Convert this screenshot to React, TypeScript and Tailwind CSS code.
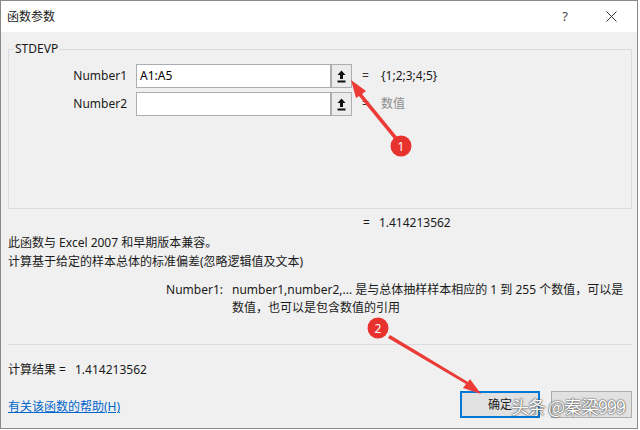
import React from "react";

const latin = "font-['Segoe_UI','Noto_Sans','Noto_Sans_CJK_SC',sans-serif]";

function PickIcon() {
  return (
    <svg width="9" height="13" viewBox="0 0 9 13">
      <path d="M4.5 0.5 L8.5 5 L6 5 L6 9 L3 9 L3 5 L0.5 5 Z" fill="#111" />
      <rect x="0.5" y="10.5" width="8" height="2" fill="#111" />
    </svg>
  );
}

function ArgRow({ label, value, result, muted }: { label: string; value: string; result: string; muted?: boolean }) {
  return (
    <div className="flex items-center h-[24px]">
      <div className="w-[118px] text-right text-[12px] text-[#1a1a1a]">{label}</div>
      <div className="ml-[9px] w-[195px] h-[24px] bg-white border border-[#abadb3] pl-[3px] flex items-center text-[12px] text-black">
        {value}
      </div>
      <div className="w-[21px] h-[24px] bg-[#ececec] border border-[#adadad] flex items-center justify-center">
        <PickIcon />
      </div>
      <div className="ml-[10px] w-[8px] text-[12px] text-[#333]">=</div>
      <div className={`ml-[11px] text-[12px] ${muted ? "text-[#8c8c8c]" : "text-[#1a1a1a]"}`}>{result}</div>
    </div>
  );
}

export default function App() {
  return (
    <div className={`relative w-[640px] h-[430px] bg-white ${latin}`}>
      <div className="w-[638px] h-[429px] border border-[#8a8a8a] flex flex-col">
        {/* title bar */}
        <div className="h-[31px] bg-white flex items-center pl-[6px] text-[12px] text-[#1a1a1a]">
          <span>函数参数</span>
          <span className="ml-auto mr-[38px] text-[13px] text-[#444]">?</span>
          <svg className="mr-[20px]" width="11" height="11" viewBox="0 0 11 11">
            <path d="M0.5 0.5 L10.5 10.5 M10.5 0.5 L0.5 10.5" stroke="#333" strokeWidth="1" />
          </svg>
        </div>

        {/* body */}
        <div className="flex-1 bg-[#f0f0f0] pl-[7px] pr-[5px] flex flex-col text-[12px] text-[#1a1a1a]">
          <fieldset className="mt-[9px] h-[168px] border border-[#dcdcdc] px-0">
            <legend className="ml-[5px] px-[1px] leading-[16px] text-[12px] text-[#1a1a1a]">STDEVP</legend>
            <div className="mt-[7px] flex flex-col gap-[4px]">
              <ArgRow label="Number1" value="A1:A5" result="{1;2;3;4;5}" />
              <ArgRow label="Number2" value="" result="数值" muted />
            </div>
          </fieldset>

          <div className="mt-[6px] leading-[16px] pl-[355px]">
            <span>=</span>
            <span className="ml-[9px]">1.414213562</span>
          </div>

          <div className="mt-[2px] leading-[19px]">
            <div>此函数与 Excel 2007 和早期版本兼容。</div>
            <div>计算基于给定的样本总体的标准偏差(忽略逻辑值及文本)</div>
          </div>

          <div className="mt-[10px] flex leading-[18px]">
            <div className="w-[224px] text-right pr-[9px]">Number1:</div>
            <div>
              <div>number1,number2,... 是与总体抽样样本相应的 1 到 255 个数值，可以是</div>
              <div>数值，也可以是包含数值的引用</div>
            </div>
          </div>

          <div className="mt-[27px] h-px bg-[#dcdcdc]" />

          <div className="mt-[17px] leading-[16px]">
            <span>计算结果 =</span>
            <span className="ml-[9px]">1.414213562</span>
          </div>

          <div className="mt-[13px] flex items-center">
            <a className="mt-[5px] text-[#0066cc] underline leading-[16px]">有关该函数的帮助(H)</a>
            <div className="ml-auto flex gap-[11px]">
              <div className="w-[80px] h-[27px] bg-[#e1e1e1] border-2 border-[#0078d7] flex items-center justify-center">
                确定
              </div>
              <div className="w-[81px] h-[27px] bg-[#e1e1e1] border border-[#adadad]" />
            </div>
          </div>
        </div>
      </div>

      {/* annotations */}
      <svg className="absolute left-0 top-0 pointer-events-none" width="640" height="430">
        <path d="M398 138 L362 94 L366 91 L351 80 L356 98 L359 96 L395 140 Z" fill="#ec3a36" />
        <circle cx="401" cy="146" r="10.5" fill="#e8322d" />
        <text x="401" y="150.5" textAnchor="middle" fontSize="12" fill="#fff" fontFamily="Noto Sans, sans-serif">1</text>
        <path d="M388 338 L466 384 L463 388 L481 394 L470 379 L468 382 L390 335 Z" fill="#ec3a36" />
        <circle cx="378" cy="328" r="10.5" fill="#e8322d" />
        <text x="378" y="332.5" textAnchor="middle" fontSize="12" fill="#fff" fontFamily="Noto Sans, sans-serif">2</text>
      </svg>

      <div className="absolute left-[511px] top-[394px] whitespace-nowrap text-[18px] tracking-[-1px] leading-[24px] text-white font-['Noto_Sans_CJK_SC',sans-serif] [text-shadow:0_0_2px_#3a3a3a,0_0_1px_#3a3a3a]">
        头条 @秦梁999
      </div>
    </div>
  );
}
